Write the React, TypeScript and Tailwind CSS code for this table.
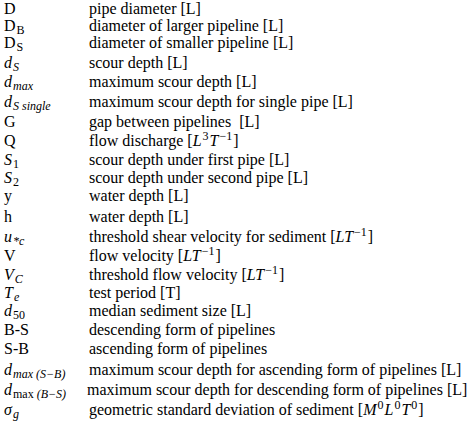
import React from 'react';

// Nomenclature list: symbol column + description column
type Row = { h: string; sym: React.ReactNode; desc: React.ReactNode; descCls?: string };

const M: React.FC<{ children: React.ReactNode }> = ({ children }) => (
  <span className="italic">{children}</span>
);

const Sub: React.FC<{ children: React.ReactNode }> = ({ children }) => (
  <sub className="text-[12px] ml-[1px]">{children}</sub>
);

const Sup: React.FC<{ children: React.ReactNode }> = ({ children }) => (
  <sup className="text-[12px] mx-[1px]">{children}</sup>
);

const rows: Row[] = [
  { h: 'h-[17px]', sym: 'D', desc: 'pipe diameter [L]' },
  { h: 'h-[17px]', sym: <>D<Sub>B</Sub></>, desc: 'diameter of larger pipeline [L]' },
  { h: 'h-[20px]', sym: <>D<Sub>S</Sub></>, desc: 'diameter of smaller pipeline [L]' },
  { h: 'h-[19px]', sym: <><M>d</M><Sub><M>S</M></Sub></>, desc: 'scour depth [L]' },
  { h: 'h-[20px]', sym: <><M>d</M><Sub><M>max</M></Sub></>, desc: 'maximum scour depth [L]' },
  { h: 'h-[20px]', sym: <><M>d</M><Sub><M>S single</M></Sub></>, desc: 'maximum scour depth for single pipe [L]' },
  { h: 'h-[19px]', sym: 'G', desc: 'gap between pipelines\u00a0 [L]' },
  {
    h: 'h-[19px]',
    sym: 'Q',
    desc: <>flow discharge [<M>L</M><Sup>3</Sup><M>T</M><Sup>−1</Sup>]</>,
  },
  { h: 'h-[18px]', sym: <><M>S</M><Sub>1</Sub></>, desc: 'scour depth under first pipe [L]' },
  { h: 'h-[18px]', sym: <><M>S</M><Sub>2</Sub></>, desc: 'scour depth under second pipe [L]' },
  { h: 'h-[21px]', sym: 'y', desc: 'water depth [L]' },
  { h: 'h-[20px]', sym: 'h', desc: 'water depth [L]' },
  {
    h: 'h-[19px]',
    sym: <><M>u</M><Sub><M>*c</M></Sub></>,
    desc: <>threshold shear velocity for sediment [<M>LT</M><Sup>−1</Sup>]</>,
  },
  { h: 'h-[19px]', sym: 'V', desc: <>flow velocity [<M>LT</M><Sup>−1</Sup>]</> },
  {
    h: 'h-[18px]',
    sym: <><M>V</M><Sub><M>C</M></Sub></>,
    desc: <>threshold flow velocity [<M>LT</M><Sup>−1</Sup>]</>,
  },
  { h: 'h-[18px]', sym: <><M>T</M><Sub><M>e</M></Sub></>, desc: 'test period [T]' },
  { h: 'h-[19px]', sym: <><M>d</M><Sub>50</Sub></>, desc: 'median sediment size [L]' },
  { h: 'h-[19px]', sym: 'B-S', desc: 'descending form of pipelines' },
  { h: 'h-[21px]', sym: 'S-B', desc: 'ascending form of pipelines' },
  {
    h: 'h-[20px]',
    sym: <><M>d</M><Sub><M>max (S−B)</M></Sub></>,
    desc: 'maximum scour depth for ascending form of pipelines [L]',
  },
  {
    h: 'h-[20px]',
    sym: <><M>d</M><Sub>max <M>(B−S)</M></Sub></>,
    desc: 'maximum scour depth for descending form of pipelines [L]',
    descCls: '-ml-[2px]',
  },
  {
    h: 'h-[24px]',
    sym: <><M>σ</M><Sub><M>g</M></Sub></>,
    desc: <>geometric standard deviation of sediment [<M>M</M><Sup>0</Sup><M>L</M><Sup>0</Sup><M>T</M><Sup>0</Sup>]</>,
  },
];

export default function App() {
  return (
    <div className="w-[469px] h-[425px] overflow-hidden bg-white text-black font-['Liberation_Serif',serif] text-[16px] leading-[18px] pl-[4px]">
      {rows.map((r, i) => (
        <div key={i} className={`flex whitespace-nowrap ${r.h}`}>
          <div className="w-[85px] shrink-0">{r.sym}</div>
          <div className={r.descCls}>{r.desc}</div>
        </div>
      ))}
    </div>
  );
}
